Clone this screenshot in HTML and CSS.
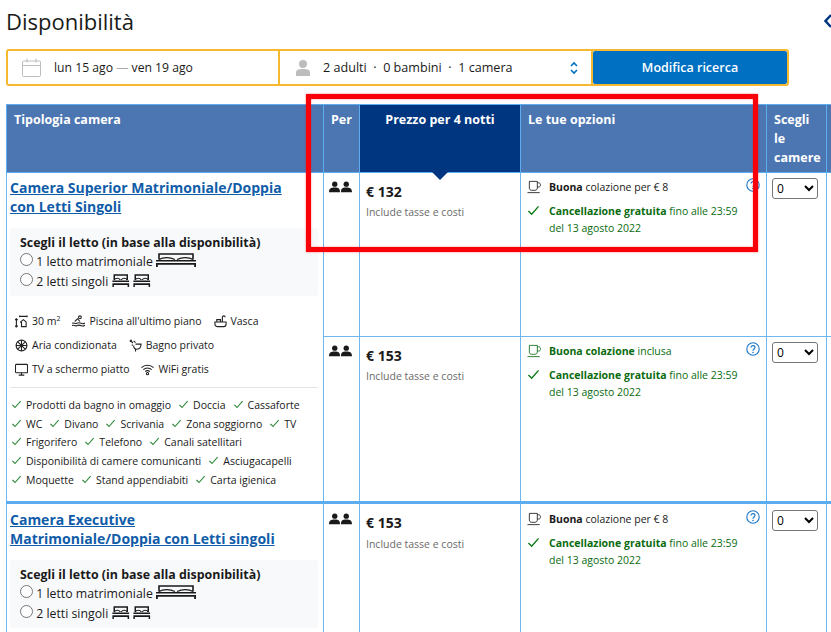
FILE: index.html
```html
<!DOCTYPE html>
<html lang="it">
<head>
    <meta charset="UTF-8">
    <meta name="viewport" content="width=device-width, initial-scale=1.0">
    <title>Disponibilità</title>
    <link rel="stylesheet" href="styles.css">
</head>
<body>
    <!-- shared icons -->
    <svg class="sprites" width="0" height="0">
        <symbol id="i-bed" viewBox="0 0 18 14">
            <path d="M2 6.500V1h14v5.500" fill="none" stroke="currentColor" stroke-width="1.600"/>
            <path d="M2 6.500c1.500-2.500 5-2.500 6.500 0M9.500 6.500c1.500-2.500 5-2.500 6.500 0" fill="none" stroke="currentColor" stroke-width="1.200"/>
            <path d="M0 7h18v1.600H0zM0 10h18v1.800H0zM0 10h1.600v4H0zM16.400 10H18v4h-1.600z" fill="currentColor"/>
        </symbol>
        <symbol id="i-bed-wide" viewBox="0 0 40 14">
            <path d="M3 6.500V1h34v5.500" fill="none" stroke="currentColor" stroke-width="1.600"/>
            <path d="M3 6.500c4-2.500 11-2.500 16 0M21 6.500c5-2.500 12-2.500 16 0" fill="none" stroke="currentColor" stroke-width="1.200"/>
            <path d="M0 7h40v1.600H0zM0 10h40v1.800H0zM0 10h1.800v4H0zM38.200 10H40v4h-1.800z" fill="currentColor"/>
        </symbol>
        <symbol id="i-people" viewBox="0 0 24 12">
            <circle cx="6" cy="3" r="2.800"/><circle cx="18" cy="3" r="2.800"/>
            <path d="M0 11.500C0 7.500 2 6.500 6 6.500s5.500 1 5.500 5zM12.500 11.500c0-4 1.500-5 5.500-5s6 1 6 5z"/>
        </symbol>
        <symbol id="i-cup" viewBox="0 0 16 14">
            <path d="M2.500 1h8.500v7c0 1.500-1 2.500-2.500 2.500H5C3.500 10.500 2.500 9.500 2.500 8zM11 2.500h1.500c2.500 0 2.500 4.500 0 4.500H11M.5 13h13" fill="none" stroke="currentColor" stroke-width=".9"/>
        </symbol>
        <symbol id="i-check" viewBox="0 0 14 12">
            <path d="M1.500 6.500l3.500 3.500 7.500-8.500" fill="none" stroke="currentColor" stroke-width="1.500"/>
        </symbol>
        <symbol id="i-help" viewBox="0 0 14 14">
            <circle cx="7" cy="7" r="6.200" fill="none" stroke="currentColor" stroke-width="1.100"/>
            <path d="M5 5.500C5 3 9 3 9 5.500 9 7 7 7 7 8.700" fill="none" stroke="currentColor" stroke-width="1.100"/>
            <circle cx="7" cy="10.500" r=".8" fill="currentColor"/>
        </symbol>
    </svg>

    <div class="page">
        <header class="top">
            <h1>Disponibilità</h1>
            <svg class="save-icon" width="7" height="16" viewBox="0 0 7 16"><path d="M7 2L1.500 8 7 14" fill="none" stroke="#003580" stroke-width="2.400"/></svg>
        </header>

        <div class="search">
            <div class="search-part dates">
                <svg class="search-icon" width="20" height="20" viewBox="0 0 20 20" fill="none" stroke="#bdbdbd"><rect x=".5" y="3" width="18" height="15.500" rx="1"/><path d="M.5 7.500h18M5 .5v4M14 .5v4"/></svg>
                <span>lun 15 ago <span class="dash">—</span> ven 19 ago</span>
            </div>
            <div class="search-part guests">
                <svg class="search-icon" width="16" height="18" viewBox="0 0 16 18" fill="#bdbdbd"><circle cx="8" cy="5" r="4"/><path d="M1 17v-3.500C1 11 3 10 8 10s7 1 7 3.500V17z"/></svg>
                <span>2 adulti &nbsp;·&nbsp; 0 bambini &nbsp;·&nbsp; 1 camera</span>
                <svg class="stepper" width="10" height="14" viewBox="0 0 10 14" fill="none" stroke="#0071c2" stroke-width="1.600"><path d="M2 5l3-3 3 3M2 9l3 3 3-3"/></svg>
            </div>
            <button class="search-btn">Modifica ricerca</button>
        </div>

        <table class="rooms">
            <colgroup>
                <col class="col-room"><col class="col-per"><col class="col-price"><col class="col-options"><col class="col-pick"><col class="col-rest">
            </colgroup>
            <thead>
                <tr>
                    <th>Tipologia camera</th>
                    <th>Per</th>
                    <th class="active">Prezzo per 4 notti</th>
                    <th>Le tue opzioni</th>
                    <th>Scegli le camere</th>
                    <th></th>
                </tr>
            </thead>
            <tbody>
                <tr class="row-a">
                    <td rowspan="2" class="room">
                        <a class="room-name" href="#">Camera Superior Matrimoniale/Doppia<br>con Letti Singoli</a>
                        <div class="beds">
                            <strong>Scegli il letto (in base alla disponibilità)</strong>
                            <label><input type="radio" name="bed1"> 1 letto matrimoniale <svg class="bed-wide"><use href="#i-bed-wide"/></svg></label>
                            <label><input type="radio" name="bed1"> 2 letti singoli <svg class="bed"><use href="#i-bed"/></svg><svg class="bed"><use href="#i-bed"/></svg></label>
                        </div>
                        <div class="facilities">
                            <div class="fac-row">
                                <span><svg class="fac" viewBox="0 0 14 14" fill="none" stroke="#222"><path d="M1.500 4v9M0 5.500L1.500 4 3 5.500M0 11.500L1.500 13 3 11.500M5 1.500h8M5 .5v2M13 .5v2M5.500 8l3.500-3 3.500 3M7 7.500V12.500h5V7.500"/></svg>30 m<sup>2</sup></span>
                                <span><svg class="fac" viewBox="0 0 14 14" fill="none" stroke="#222"><circle cx="8.500" cy="2.500" r="1.500"/><path d="M3 7l3-3 2.500 3M0 9c2-1.500 3 1 5 0s3-1 5 0 3 0 4-.5M0 11.500c2-1.500 3 1 5 0s3-1 5 0 3 0 4-.5"/></svg>Piscina all'ultimo piano</span>
                                <span><svg class="fac" viewBox="0 0 14 14" fill="none" stroke="#222"><path d="M1 7.500h12V10c0 1.500-1 2.500-2.500 2.500h-7C2 12.500 1 11.500 1 10zM3 7.500V5h4v2.500M9 7.500V2.500c0-2 3-2 3 0"/></svg>Vasca</span>
                            </div>
                            <div class="fac-row">
                                <span><svg class="fac" viewBox="0 0 14 14" fill="none" stroke="#222"><circle cx="7" cy="7" r="5.800"/><path d="M7 1v12M1 7h12M3 3l8 8M11 3l-8 8"/></svg>Aria condizionata</span>
                                <span><svg class="fac" viewBox="0 0 14 14" fill="none" stroke="#222"><path d="M1 1l3 3M3 1L1 3M5 2l2 2M7 5.500h6c0 4-2 5.500-4.500 5.500S5 9.500 5 7M7 11v2.500M4 6l-1 1M3 3.500l1 1"/></svg>Bagno privato</span>
                            </div>
                            <div class="fac-row">
                                <span><svg class="fac" viewBox="0 0 14 14" fill="none" stroke="#222"><rect x=".5" y="1.500" width="13" height="9" rx="1"/><path d="M4 13h6M7 10.500V13"/></svg>TV a schermo piatto</span>
                                <span><svg class="fac" viewBox="0 0 14 14" fill="none" stroke="#222"><path d="M.5 5c3.500-3.500 9.500-3.500 13 0M2.500 7.200c2.500-2.400 6.500-2.400 9 0M4.500 9.200c1.500-1.200 3.500-1.200 5 0"/><circle cx="7" cy="11.500" r="1.200"/></svg>WiFi gratis</span>
                            </div>
                        </div>
                        <div class="amenities">
                            <div><span><svg class="tick"><use href="#i-check"/></svg>Prodotti da bagno in omaggio</span><span><svg class="tick"><use href="#i-check"/></svg>Doccia</span><span><svg class="tick"><use href="#i-check"/></svg>Cassaforte</span></div>
                            <div><span><svg class="tick"><use href="#i-check"/></svg>WC</span><span><svg class="tick"><use href="#i-check"/></svg>Divano</span><span><svg class="tick"><use href="#i-check"/></svg>Scrivania</span><span><svg class="tick"><use href="#i-check"/></svg>Zona soggiorno</span><span><svg class="tick"><use href="#i-check"/></svg>TV</span></div>
                            <div><span><svg class="tick"><use href="#i-check"/></svg>Frigorifero</span><span><svg class="tick"><use href="#i-check"/></svg>Telefono</span><span><svg class="tick"><use href="#i-check"/></svg>Canali satellitari</span></div>
                            <div><span><svg class="tick"><use href="#i-check"/></svg>Disponibilità di camere comunicanti</span><span><svg class="tick"><use href="#i-check"/></svg>Asciugacapelli</span></div>
                            <div><span><svg class="tick"><use href="#i-check"/></svg>Moquette</span><span><svg class="tick"><use href="#i-check"/></svg>Stand appendiabiti</span><span><svg class="tick"><use href="#i-check"/></svg>Carta igienica</span></div>
                        </div>
                    </td>
                    <td><svg class="people"><use href="#i-people"/></svg></td>
                    <td class="price"><b>€ 132</b><small>Include tasse e costi</small></td>
                    <td class="options">
                        <svg class="help help-a"><use href="#i-help"/></svg>
                        <div class="meal"><svg class="cup"><use href="#i-cup"/></svg><span><b>Buona</b> colazione per € 8</span></div>
                        <div class="cancel"><svg class="ok"><use href="#i-check"/></svg><span><b>Cancellazione gratuita</b> fino alle 23:59<br>del 13 agosto 2022</span></div>
                    </td>
                    <td class="pick"><select><option>0</option></select></td>
                    <td></td>
                </tr>
                <tr class="row-b">
                    <td><svg class="people"><use href="#i-people"/></svg></td>
                    <td class="price"><b>€ 153</b><small>Include tasse e costi</small></td>
                    <td class="options">
                        <svg class="help"><use href="#i-help"/></svg>
                        <div class="meal green"><svg class="cup"><use href="#i-cup"/></svg><span><b>Buona colazione</b> inclusa</span></div>
                        <div class="cancel"><svg class="ok"><use href="#i-check"/></svg><span><b>Cancellazione gratuita</b> fino alle 23:59<br>del 13 agosto 2022</span></div>
                    </td>
                    <td class="pick"><select><option>0</option></select></td>
                    <td></td>
                </tr>
                <tr class="row-c">
                    <td class="room">
                        <a class="room-name" href="#">Camera Executive<br>Matrimoniale/Doppia con Letti singoli</a>
                        <div class="beds">
                            <strong>Scegli il letto (in base alla disponibilità)</strong>
                            <label><input type="radio" name="bed2"> 1 letto matrimoniale <svg class="bed-wide"><use href="#i-bed-wide"/></svg></label>
                            <label><input type="radio" name="bed2"> 2 letti singoli <svg class="bed"><use href="#i-bed"/></svg><svg class="bed"><use href="#i-bed"/></svg></label>
                        </div>
                    </td>
                    <td><svg class="people"><use href="#i-people"/></svg></td>
                    <td class="price"><b>€ 153</b><small>Include tasse e costi</small></td>
                    <td class="options">
                        <svg class="help"><use href="#i-help"/></svg>
                        <div class="meal"><svg class="cup"><use href="#i-cup"/></svg><span><b>Buona</b> colazione per € 8</span></div>
                        <div class="cancel"><svg class="ok"><use href="#i-check"/></svg><span><b>Cancellazione gratuita</b> fino alle 23:59<br>del 13 agosto 2022</span></div>
                    </td>
                    <td class="pick"><select><option>0</option></select></td>
                    <td></td>
                </tr>
            </tbody>
        </table>

        <!-- red annotation drawn on top of the screenshot -->
        <div class="annotation"></div>
    </div>
</body>
</html>
```

FILE: styles.css
```css
* {
    margin: 0;
    padding: 0;
    box-sizing: border-box;
}

html, body {
    height: 632px;
    overflow: hidden;
    background-color: white;
}

body {
    font-family: 'Open Sans', 'Noto Sans', sans-serif;
    font-size: 12px;
    color: #1a1a1a;
}

.sprites {
    position: absolute;
}

.page {
    position: relative;
    width: 831px;
    padding: 6px 0 0 6px;
}

.top {
    display: flex;
    align-items: center;
    justify-content: space-between;
    height: 29px;
    margin-bottom: 14px;
}

.top h1 {
    font-size: 22px;
    font-weight: 400;
}

/* search bar */
.search {
    display: flex;
    width: 783px;
    height: 37px;
    margin-bottom: 18px;
    font-size: 12.2px;
    border: 2px solid #f5b82e;
    border-radius: 3px;
}

.search-part {
    display: flex;
    align-items: center;
}

.dates {
    width: 272px;
    padding-left: 14px;
    border-right: 2px solid #f5b82e;
}

.guests {
    width: 313px;
    padding-left: 15px;
    font-size: 12.6px;
    border-right: 2px solid #f5b82e;
}

.search-icon {
    margin-right: 12px;
}

.dash {
    color: #aaa;
}

.stepper {
    margin-left: 56px;
}

.search-btn {
    flex: 1;
    border: none;
    border-radius: 2px;
    background-color: #0071c2;
    color: white;
    font-family: inherit;
    font-size: 12.5px;
    font-weight: 600;
}

/* rooms table */
.rooms {
    table-layout: fixed;
    width: 825px;
    border-collapse: collapse;
}

.col-room { width: 317px; }
.col-per { width: 36px; }
.col-price { width: 161px; }
.col-options { width: 246px; }
.col-pick { width: 60px; }
.col-rest { width: 5px; }

.rooms th {
    position: relative;
    height: 68px;
    padding: 5px 7px;
    vertical-align: top;
    text-align: left;
    font-size: 12.5px;
    line-height: 19px;
    font-weight: 700;
    color: white;
    background-color: #4c76b2;
    border: 1px solid #5badf0;
}

.rooms th.active {
    text-align: center;
    background-color: #003580;
}

.rooms th.active::after {
    content: "";
    position: absolute;
    left: 50%;
    top: 100%;
    margin-left: -8px;
    border: 8px solid transparent;
    border-bottom: none;
    border-top-color: #003580;
    z-index: 1;
}

.rooms td {
    vertical-align: top;
    border: 1px solid #6db7f2;
}

.row-a td:not(.room) { height: 164px; }
.row-b td { height: 166px; }
.row-c td { height: 128px; border-top: 3px solid #5badf0; }

.room {
    padding: 6px 5px 6px 3px;
}

.room-name {
    display: block;
    font-size: 14px;
    font-weight: 700;
    line-height: 18.5px;
    color: #0f5ca8;
}

.beds {
    display: flex;
    flex-direction: column;
    margin-top: 12px;
    padding: 6px 10px 6px;
    height: 68px;
    font-size: 12.3px;
    line-height: 19.5px;
    background-color: #f8f9fb;
    border-radius: 4px;
}

.beds strong {
    font-size: 12.4px;
    line-height: 18px;
    font-weight: 700;
}

.beds input {
    width: 13px;
    height: 13px;
}

.bed-wide {
    width: 40px;
    height: 14px;
    vertical-align: -1px;
}

.bed {
    width: 19.5px;
    height: 13px;
    margin-right: 1px;
    vertical-align: -1px;
}

.facilities {
    margin-top: 13px;
    padding: 0 0 6px 5px;
    font-size: 10.5px;
    border-bottom: 1px solid #e4e4e4;
}

.fac-row {
    display: flex;
    align-items: center;
    gap: 12px;
    height: 24px;
}

.fac-row span {
    display: flex;
    align-items: center;
}

.fac-row sup {
    font-size: 7px;
    align-self: flex-start;
}

.fac {
    width: 13px;
    height: 13px;
    margin-right: 4px;
    stroke-width: 1.2;
}

.amenities {
    padding-top: 8px;
    font-size: 10.5px;
    line-height: 18.7px;
}

.amenities div {
    display: flex;
    gap: 7px;
    padding-left: 1px;
}

.tick {
    width: 11px;
    height: 9px;
    margin-right: 4px;
    color: #2f8a3c;
}

.people {
    display: block;
    width: 23px;
    height: 12px;
    margin: 8px 0 0 5px;
    fill: #1a1a1a;
}

.price {
    padding: 10px 6px;
}

.price b {
    display: block;
    font-size: 14px;
    line-height: 18px;
}

.price small {
    display: block;
    margin-top: 4px;
    font-size: 10.5px;
    color: #6b6b6b;
}

.options {
    position: relative;
    padding: 5px 6px;
    font-size: 10.5px;
}

.meal {
    display: flex;
    align-items: center;
    gap: 7px;
    height: 18px;
}

.meal.green {
    color: #0a6b0f;
}

.cup {
    width: 15px;
    height: 14px;
}

.cancel {
    display: flex;
    gap: 9px;
    margin-top: 7px;
    line-height: 17px;
    color: #0a6b0f;
}

.ok {
    width: 13px;
    height: 11px;
    margin-top: 2px;
    color: #0a7a14;
}

.help {
    position: absolute;
    top: 5px;
    right: 6px;
    width: 14px;
    height: 14px;
    color: #1a73c8;
}

.pick {
    padding: 5px;
}

.pick select {
    width: 46px;
    height: 21px;
    font-family: inherit;
    font-size: 12px;
    background-color: white;
    border-radius: 3px;
}

/* third room sits a pixel lower under its thicker top border */
.row-c .options,
.row-c .pick {
    padding-top: 6px;
}

.row-c .help {
    top: 6px;
}

.row-c .people {
    margin-top: 9px;
}

.row-c .price small {
    margin-top: 5px;
}

.row-c .room-name {
    margin-top: 1px;
}

/* annotation */
.annotation {
    position: absolute;
    left: 306px;
    top: 94px;
    width: 452px;
    height: 158px;
    border: 5px solid #fa0008;
    box-shadow: 0 0 2px rgba(255, 0, 0, 0.5), inset 0 0 2px rgba(255, 0, 0, 0.5);
    pointer-events: none;
    z-index: 2;
}
```
